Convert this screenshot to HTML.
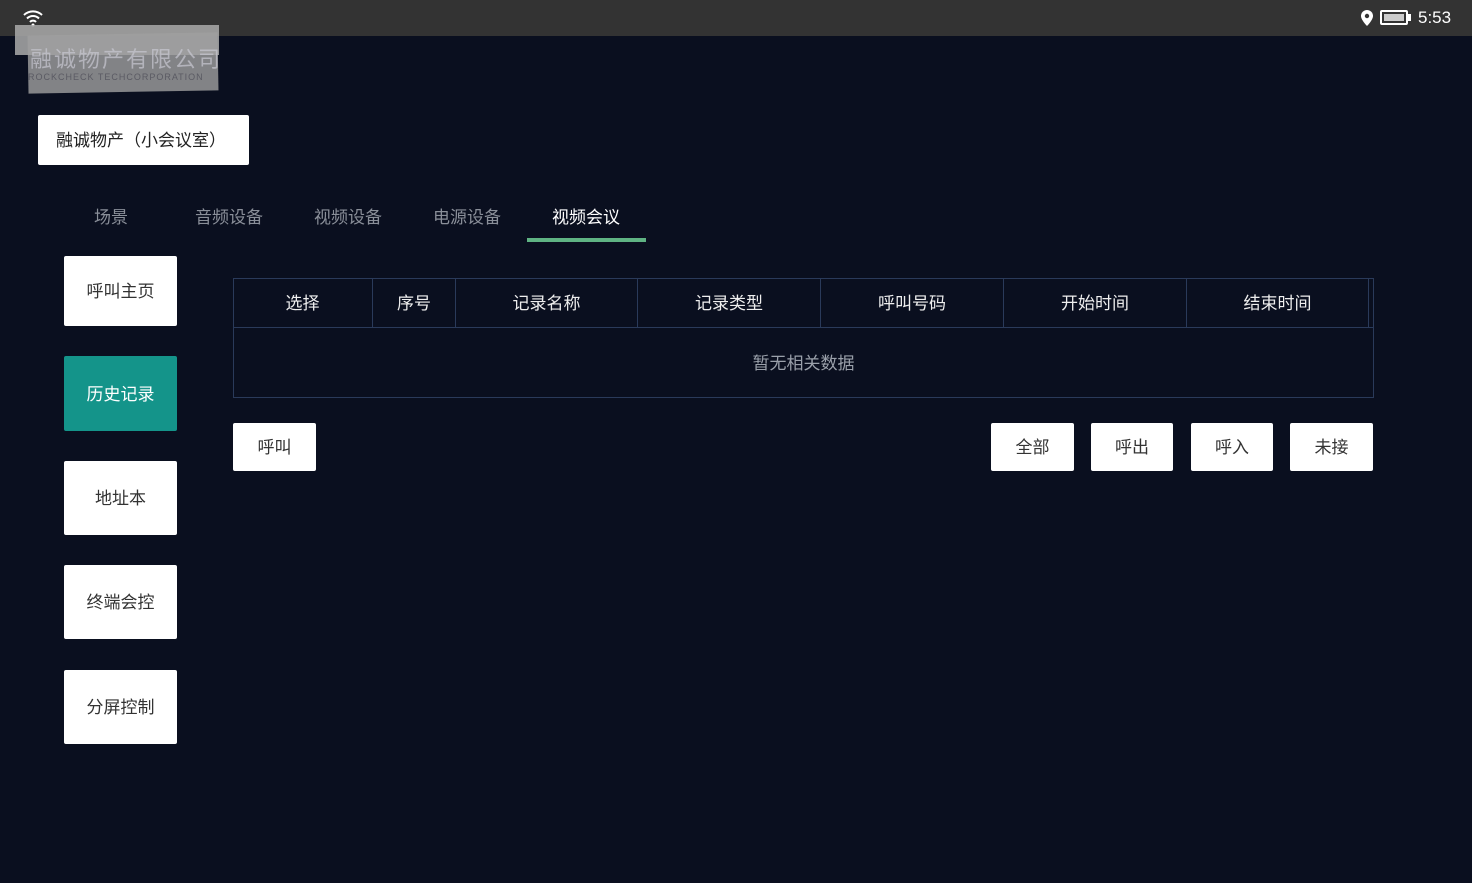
<!DOCTYPE html>
<html><head><meta charset="utf-8"><style>
*{margin:0;padding:0;box-sizing:border-box}
body{width:1472px;height:883px;background:#0a0f1f;position:relative;overflow:hidden;font-family:"Liberation Sans","Noto Sans CJK SC",sans-serif;color:#fff}
.sb{position:absolute;left:0;top:0;width:1472px;height:36px;background:#333}
.abs{position:absolute}
.btn{position:absolute;background:#fff;color:#333;font-size:17px;display:flex;align-items:center;justify-content:center;border-radius:2px;padding-bottom:3px}
.tab{position:absolute;top:203px;font-size:17px;color:#8a8f99}
.th{position:absolute;top:279px;height:48px;display:flex;align-items:center;justify-content:center;font-size:17px;color:#eee;border-right:1px solid #2a3a5a;padding-bottom:3px}
</style></head><body>
<div class="sb"></div>
<svg class="abs" style="left:22px;top:9px" width="22" height="18" viewBox="0 0 22 18"><g fill="none" stroke="#fff" stroke-width="2"><path d="M2 6a13 13 0 0 1 18 0"/><path d="M5 9.5a8.5 8.5 0 0 1 12 0"/><path d="M8 13a4 4 0 0 1 6 0"/></g><circle cx="11" cy="16" r="1.5" fill="#fff"/></svg>
<div class="abs" style="left:15px;top:25px;width:204px;height:30px;background:rgba(170,170,170,.85)"></div>
<div class="abs" style="left:28px;top:34px;width:190px;height:58px;background:rgba(160,160,160,.8);transform:rotate(-1deg)"></div>
<div class="abs" style="left:30px;top:42px;font-size:22px;color:rgba(200,200,210,.7);letter-spacing:2px">融诚物产有限公司</div>
<div class="abs" style="left:28px;top:72px;font-size:9px;color:rgba(80,80,90,.8);letter-spacing:1px">ROCKCHECK TECHCORPORATION</div>
<svg class="abs" style="left:1360px;top:9px" width="14" height="18" viewBox="0 0 14 18"><path d="M7 1a6 6 0 0 0-6 6c0 4 6 10 6 10s6-6 6-10a6 6 0 0 0-6-6z" fill="#fff"/><circle cx="7" cy="7" r="2.2" fill="#333"/></svg>
<div class="abs" style="left:1380px;top:10px;width:28px;height:15px;border:2px solid #fff;border-radius:2px"><div style="margin:2px;height:7px;background:#ccc"></div></div>
<div class="abs" style="left:1408px;top:14px;width:3px;height:7px;background:#fff"></div>
<div class="abs" style="left:1418px;top:8px;font-size:17px;color:#fff">5:53</div>
<div class="btn" style="left:38px;top:115px;width:211px;height:50px;justify-content:flex-start;padding-left:18px;color:#222">融诚物产（小会议室）</div>
<div class="tab" style="left:94px">场景</div>
<div class="tab" style="left:195px">音频设备</div>
<div class="tab" style="left:314px">视频设备</div>
<div class="tab" style="left:433px">电源设备</div>
<div class="tab" style="left:552px;color:#fff">视频会议</div>
<div class="abs" style="left:527px;top:238px;width:119px;height:4px;background:#5fb383"></div>
<div class="btn" style="left:64px;top:256px;width:113px;height:70px">呼叫主页</div>
<div class="btn" style="left:64px;top:356px;width:113px;height:75px;background:#14948a;color:#fff">历史记录</div>
<div class="btn" style="left:64px;top:461px;width:113px;height:74px">地址本</div>
<div class="btn" style="left:64px;top:565px;width:113px;height:74px">终端会控</div>
<div class="btn" style="left:64px;top:670px;width:113px;height:74px">分屏控制</div>
<div class="abs" style="left:233px;top:278px;width:1141px;height:120px;border:1px solid #2a3a5a"></div>
<div class="abs" style="left:233px;top:327px;width:1141px;height:1px;background:#2a3a5a"></div>
<div class="th" style="left:233px;width:140px">选择</div>
<div class="th" style="left:373px;width:83px">序号</div>
<div class="th" style="left:456px;width:182px">记录名称</div>
<div class="th" style="left:638px;width:183px">记录类型</div>
<div class="th" style="left:821px;width:183px">呼叫号码</div>
<div class="th" style="left:1004px;width:183px">开始时间</div>
<div class="th" style="left:1187px;width:182px">结束时间</div>
<div class="abs" style="left:233px;top:349px;width:1141px;text-align:center;font-size:17px;color:#9aa0aa">暂无相关数据</div>
<div class="btn" style="left:233px;top:423px;width:83px;height:48px">呼叫</div>
<div class="btn" style="left:991px;top:423px;width:83px;height:48px">全部</div>
<div class="btn" style="left:1091px;top:423px;width:82px;height:48px">呼出</div>
<div class="btn" style="left:1191px;top:423px;width:82px;height:48px">呼入</div>
<div class="btn" style="left:1290px;top:423px;width:83px;height:48px">未接</div>
</body></html>
